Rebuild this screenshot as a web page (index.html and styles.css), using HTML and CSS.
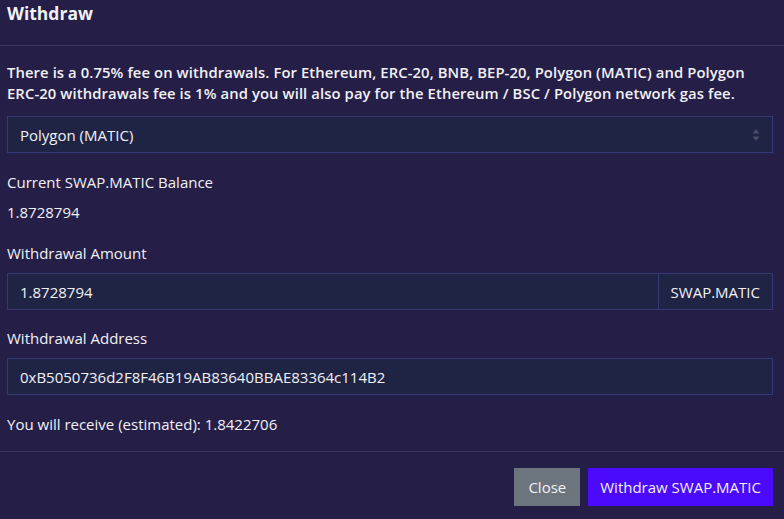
FILE: index.html
```html
<!DOCTYPE html>
<html lang="en">
<head>
    <meta charset="UTF-8">
    <meta name="viewport" content="width=device-width, initial-scale=1.0">
    <title>Withdraw</title>
    <link rel="stylesheet" href="styles.css">
</head>
<body>
    <div class="modal">
        <div class="modal-header">
            <h5>Withdraw</h5>
        </div>
        <div class="modal-body">
            <p class="notice">There is a 0.75% fee on withdrawals. For Ethereum, ERC-20, BNB, BEP-20, Polygon (MATIC) and Polygon ERC-20 withdrawals fee is 1% and you will also pay for the Ethereum / BSC / Polygon network gas fee.</p>

            <div class="select-box">
                <span>Polygon (MATIC)</span>
                <svg class="arrows" width="8" height="14" viewBox="0 0 8 14">
                    <path d="M4 1 L7.5 5.5 H0.5 Z" fill="#4a4d63"/>
                    <path d="M4 13 L7.5 8.5 H0.5 Z" fill="#4a4d63"/>
                </svg>
            </div>

            <div class="field balance">
                <label>Current SWAP.MATIC Balance</label>
                <div class="value">1.8728794</div>
            </div>

            <div class="field">
                <label for="amount">Withdrawal Amount</label>
                <div class="input-group">
                    <input type="text" id="amount" value="1.8728794">
                    <span class="addon">SWAP.MATIC</span>
                </div>
            </div>

            <div class="field">
                <label for="address">Withdrawal Address</label>
                <input type="text" id="address" value="0xB5050736d2F8F46B19AB83640BBAE83364c114B2">
            </div>

            <div class="receive">You will receive (estimated): 1.8422706</div>
        </div>
        <div class="modal-footer">
            <button class="btn btn-grey">Close</button>
            <button class="btn btn-primary">Withdraw SWAP.MATIC</button>
        </div>
    </div>
</body>
</html>
```

FILE: styles.css
```css
body {
    font-family: "Open Sans", "Noto Sans", sans-serif;
    background-color: #251e47;
    color: #f1f1f5;
    margin: 0;
    padding: 0;
}

.modal {
    width: 784px;
    height: 519px;
    overflow: hidden;
}

.modal-header {
    padding: 1px 11px 0 7px;
    height: 44px;
    border-bottom: 1px solid #3d3760;
}

.modal-header h5 {
    margin: 0;
    font-size: 17.5px;
    font-weight: 700;
    line-height: 24px;
}

.modal-body {
    padding: 16px 11px 0 7px;
}

.notice {
    margin: 0 0 12px 0;
    font-size: 14.8px;
    font-weight: 600;
    line-height: 21px;
    letter-spacing: 0.1px;
}

.select-box {
    height: 35px;
    border: 1px solid #343b74;
    background-color: #1f2445;
    display: flex;
    align-items: center;
    justify-content: space-between;
    padding: 0 12px;
    font-size: 15px;
    margin-bottom: 19px;
}

.field {
    margin-bottom: 18px;
}

.field.balance {
    margin-bottom: 21px;
}

label {
    display: block;
    font-size: 15px;
    line-height: 20px;
    margin-bottom: 10px;
}

.value {
    font-size: 15px;
    line-height: 20px;
}

.input-group {
    display: flex;
}

input[type="text"] {
    width: 100%;
    height: 37px;
    box-sizing: border-box;
    border: 1px solid #343b74;
    background-color: #1f2445;
    color: #f1f1f5;
    font-family: inherit;
    font-size: 15px;
    padding: 0 12px;
    margin: 0;
    outline: none;
}

.addon {
    flex: none;
    height: 37px;
    box-sizing: border-box;
    border: 1px solid #343b74;
    border-left: none;
    background-color: #1f2445;
    font-size: 15px;
    display: flex;
    align-items: center;
    padding: 0 12px;
}

.receive {
    font-size: 15px;
    line-height: 20px;
    margin-top: 19px;
    padding-bottom: 17px;
}

.modal-footer {
    border-top: 1px solid #3d3760;
    display: flex;
    justify-content: flex-end;
    gap: 8px;
    padding: 16px 11px 0 0;
}

.btn {
    border: none;
    height: 38px;
    line-height: 38px;
    padding: 0 12px;
    font-family: inherit;
    font-size: 15px;
    color: #f1f1f5;
    cursor: pointer;
}

.btn-grey {
    background-color: #6c757d;
    padding: 0 14px;
}

.btn-primary {
    background-color: #4b0afc;
}
```
